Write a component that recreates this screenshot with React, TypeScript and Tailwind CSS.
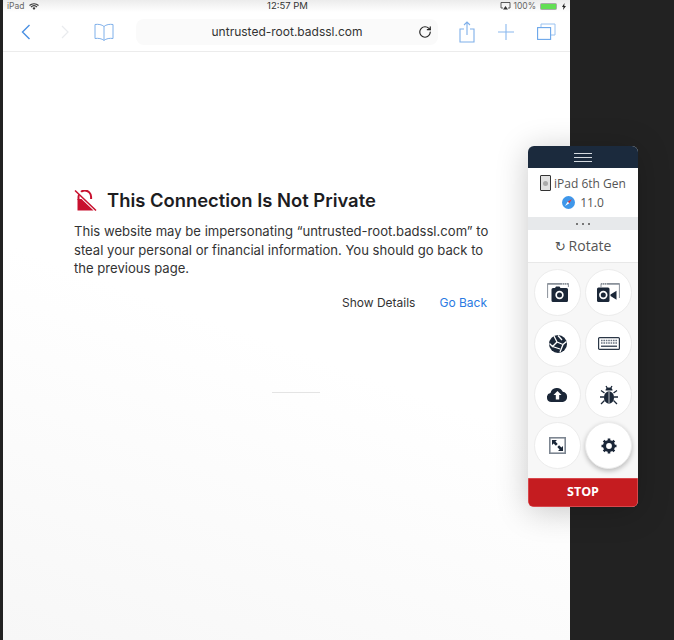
import { RotateCw } from "lucide-react";
import type { ReactNode } from "react";

const SANS = "font-['Inter','Liberation_Sans',sans-serif]";
const PANEL = "font-['Open_Sans','Noto_Sans',sans-serif]";

function Circle({ children, raised }: { children: ReactNode; raised?: boolean }) {
  return (
    <div
      className={`flex h-[47px] w-[47px] items-center justify-center rounded-full border border-[#ececec] bg-white ${
        raised ? "shadow-[0_2px_5px_rgba(0,0,0,0.25)]" : ""
      }`}
    >
      {children}
    </div>
  );
}

function CameraShot() {
  return (
    <svg width="22" height="19" viewBox="0 0 22 19" fill="none">
      <path d="M0.600 15V0.600H21.400V4" stroke="#8a919a" strokeWidth="1" />
      <path d="M0.600 0h20.800v1.800H0.600z" fill="#8a919a" />
      <path d="M15 1h1M17 1h1M19 1h1" stroke="#fff" strokeWidth="1" />
      <path d="M6 5h2l1-1.500h3.500l1 1.500h6a1.500 1.500 0 0 1 1.500 1.500v11a1.500 1.500 0 0 1-1.500 1.500H6a1.500 1.500 0 0 1-1.500-1.500v-11A1.500 1.500 0 0 1 6 5z" fill="#1b2738" />
      <circle cx="12.500" cy="12" r="4.200" fill="#fff" />
      <circle cx="12.500" cy="12" r="2.500" fill="#1b2738" />
    </svg>
  );
}

function VideoShot() {
  return (
    <svg width="23" height="19" viewBox="0 0 23 19" fill="none">
      <path d="M4 4V0.600H22.400V15" stroke="#8a919a" strokeWidth="1" />
      <path d="M4 0h18.400v1.800H4z" fill="#8a919a" />
      <path d="M5 1h1M7 1h1M9 1h1" stroke="#fff" strokeWidth="1" />
      <rect x="0" y="4.500" width="12.500" height="14.500" rx="1.500" fill="#1b2738" />
      <circle cx="6.300" cy="12" r="4.200" fill="#fff" />
      <circle cx="6.300" cy="12" r="2.500" fill="#1b2738" />
      <path d="M13.500 11.500l6-3.800v9l-6-3.800z" fill="#1b2738" />
    </svg>
  );
}

function Globe() {
  return (
    <svg width="18" height="18" viewBox="0 0 18 18">
      <circle cx="9" cy="9" r="9" fill="#1b2738" />
      <path d="M5 1l3 6-4.500 4.500L0.500 8.500M8 7l6 2.500-3 7.500M14 9.500l3.500-3M3.500 11.500l7.500 2.500M9 0.500l4 4.500" stroke="#fff" strokeWidth="1.300" fill="none" />
    </svg>
  );
}

function Keyboard() {
  return (
    <svg width="22" height="13" viewBox="0 0 22 13" fill="none">
      <rect x="0.600" y="0.600" width="20.800" height="11.800" rx="1" stroke="#2a3646" strokeWidth="1.200" />
      <path d="M3 3.500h16M3 6h16" stroke="#6a7482" strokeWidth="1.500" strokeDasharray="1.600 0.800" />
      <path d="M3 9.300h16" stroke="#4a5564" strokeWidth="1.500" />
    </svg>
  );
}

function CloudUpload() {
  return (
    <svg width="21" height="15" viewBox="0 0 21 15">
      <path d="M4.500 15a4.500 4.500 0 0 1-1-8.900A6.500 6.500 0 0 1 15.800 4.800 5.200 5.200 0 0 1 16 15z" fill="#1b2738" />
      <path d="M10.500 4l4 4h-2.300v4.500H8.800V8H6.500z" fill="#fff" />
    </svg>
  );
}

function Bug() {
  return (
    <svg width="20" height="20" viewBox="0 0 20 20" fill="none">
      <path d="M6.500 5.500a3.500 3 0 0 1 7 0z" fill="#1b2738" />
      <path d="M10 6.500c-3 0-5 2.500-5 6s2 6 5 6 5-2.500 5-6-2-6-5-6z" fill="#1b2738" />
      <path d="M10 7v11" stroke="#fff" strokeWidth="0.700" />
      <path d="M7 1l1.500 2.500M13 1l-1.500 2.500M5.500 8L2 5.500M14.500 8L18 5.500M5 12H1M15 12h4M5.500 15.500L2 19M14.500 15.500L18 19" stroke="#1b2738" strokeWidth="1.300" />
    </svg>
  );
}

function Resize() {
  return (
    <svg width="17" height="17" viewBox="0 0 17 17" fill="none">
      <rect x="0.800" y="0.800" width="15.400" height="15.400" stroke="#7d8691" strokeWidth="1.600" />
      <path d="M3 3h5L6.400 4.600 8.700 6.900 6.900 8.700 4.600 6.400 3 8zM14 14H9l1.600-1.600-2.300-2.300 1.800-1.800 2.300 2.300L14 9z" fill="#1b2738" />
    </svg>
  );
}

function Gear() {
  return (
    <svg width="16" height="16" viewBox="0 0 16 16">
      <circle cx="8" cy="8" r="4.500" fill="none" stroke="#1b2738" strokeWidth="3.200" />
      <path
        d="M8 0.500v3M8 12.500v3M0.500 8h3M12.500 8h3M2.700 2.700l2.100 2.100M11.200 11.200l2.100 2.100M2.700 13.300l2.100-2.100M11.200 4.800l2.100-2.100"
        stroke="#1b2738"
        strokeWidth="2.600"
      />
    </svg>
  );
}

function SafariBadge() {
  return (
    <svg width="13" height="13" viewBox="0 0 13 13">
      <circle cx="6.500" cy="6.500" r="6.500" fill="#3f97ea" />
      <path d="M10 3L7.300 7.300 5.700 5.700z" fill="#e0343a" />
      <path d="M3 10l2.700-4.300 1.600 1.600z" fill="#fff" />
    </svg>
  );
}

function DevicePanel() {
  return (
    <aside className={`absolute left-[528px] top-[146px] flex w-[110px] flex-col overflow-hidden rounded-[6px] bg-[#f7f7f7] shadow-[0_4px_32px_rgba(0,0,0,0.22)] ${PANEL}`}>
      <div className="flex h-[22px] flex-col items-center justify-center gap-[3px] bg-[#1b2a3d]">
        <span className="h-px w-[18px] bg-[#d5dae0]" />
        <span className="h-px w-[18px] bg-[#d5dae0]" />
        <span className="h-px w-[18px] bg-[#d5dae0]" />
      </div>
      <div className="flex h-[49px] flex-col items-center justify-center bg-white text-[12px] leading-[19px] text-[#555]">
        <div className="flex items-center gap-[3px]">
          <span className="flex h-[16px] w-[11px] items-center justify-center rounded-[1px] border border-[#333] bg-[#e2e2e2]">
            <span className="h-[5px] w-[5px] rounded-full bg-[#aaa]" />
          </span>
          iPad 6th Gen
        </div>
        <div className="flex items-center gap-[5px]">
          <SafariBadge />
          11.0
        </div>
      </div>
      <div className="flex h-[13px] items-center justify-center gap-[4px] bg-[#e7e9eb]">
        <span className="h-[2px] w-[2px] bg-[#777]" />
        <span className="h-[2px] w-[2px] bg-[#777]" />
        <span className="h-[2px] w-[2px] bg-[#777]" />
      </div>
      <div className="flex h-[33px] items-center justify-center gap-[3px] border-b border-[#e8e8e8] bg-white text-[14px] leading-none text-[#555]">
        <span className="font-['DejaVu_Sans',sans-serif] text-[13px]">↻</span>
        Rotate
      </div>
      <div className="grid grid-cols-2 justify-items-center gap-x-[4px] gap-y-[4px] px-[6px] pb-[9px] pt-[6px]">
        <Circle><CameraShot /></Circle>
        <Circle><VideoShot /></Circle>
        <Circle><Globe /></Circle>
        <Circle><Keyboard /></Circle>
        <Circle><CloudUpload /></Circle>
        <Circle><Bug /></Circle>
        <Circle><Resize /></Circle>
        <Circle raised><Gear /></Circle>
      </div>
      <div className="flex h-[29px] items-center justify-center rounded-b-[4px] border border-[#d8474c] bg-[#c51c20] text-[12.500px] font-bold text-white">
        STOP
      </div>
    </aside>
  );
}

function Toolbar() {
  return (
    <div className="flex h-[40px] items-center border-b border-[#ececec] bg-white">
      <svg width="10" height="16" viewBox="0 0 10 16" fill="none" className="ml-[18px]">
        <path d="M8.500 1L1.500 8l7 7" stroke="#4a90e2" strokeWidth="1.400" />
      </svg>
      <svg width="8" height="14" viewBox="0 0 8 14" fill="none" className="ml-[30px]">
        <path d="M1 1l6 6-6 6" stroke="#e9ebee" strokeWidth="1.200" />
      </svg>
      <svg width="20" height="18" viewBox="0 0 20 18" fill="none" className="ml-[25px]">
        <path d="M10 3.500C8 1.500 4 1 1 1.500v14c3-.5 7 0 9 2 2-2 6-2.500 9-2v-14c-3-.5-7 0-9 2zM10 3.500V17" stroke="#7fb0ea" strokeWidth="1" />
      </svg>
      <div className="ml-[22px] flex h-[26px] w-[302px] items-center rounded-[8px] bg-[#fafafa] pr-[6px]">
        <span className={`flex-1 pl-[20px] text-center text-[12px] text-[#333] ${SANS}`}>untrusted-root.badssl.com</span>
        <RotateCw size={14} strokeWidth={2} color="#222" />
      </div>
      <svg width="16" height="22" viewBox="0 0 16 22" fill="none" className="ml-[21px]">
        <path d="M5 8H1v13h14V8h-4M8 14V1M5 4l3-3 3 3" stroke="#7fb0ea" strokeWidth="1.100" />
      </svg>
      <svg width="16" height="16" viewBox="0 0 16 16" fill="none" className="ml-[23px]">
        <path d="M8 0v16M0 8h16" stroke="#8ab8ee" strokeWidth="1.100" />
      </svg>
      <svg width="19" height="17" viewBox="0 0 19 17" fill="none" className="ml-[23px]">
        <path d="M4 4V1h14v11h-4" stroke="#9ac2f0" strokeWidth="1" />
        <rect x="0.600" y="4.600" width="13" height="11.800" stroke="#6aa6ea" strokeWidth="1.100" />
      </svg>
    </div>
  );
}

function StatusBar() {
  return (
    <div className={`flex h-[12px] items-center justify-between bg-gradient-to-b from-[#ececec] to-white pl-[4px] pr-[4px] text-[8.500px] leading-none text-[#444] ${SANS}`}>
      <div className="flex w-[182px] items-center gap-[5px]">
        <span className="text-[#666]">iPad</span>
        <svg width="10" height="7" viewBox="0 0 10 7" fill="none">
          <path d="M0.500 2.500a6.500 6.500 0 0 1 9 0M2 4a4.500 4.500 0 0 1 6 0" stroke="#333" strokeWidth="1.100" />
          <path d="M3.500 5a2.200 2.200 0 0 1 3 0L5 7z" fill="#333" />
        </svg>
      </div>
      <span className="text-[9.500px] text-[#333]">12:57 PM</span>
      <div className="flex w-[180px] items-center justify-end gap-[2px]">
        <svg width="11" height="8" viewBox="0 0 10 8" fill="none">
          <path d="M2.500 6H0.500V0.500h9V6h-2" stroke="#333" strokeWidth="0.800" />
          <path d="M5 4l2.500 3.500h-5z" fill="#333" />
        </svg>
        <span className="text-[#666]">100%</span>
        <span className="ml-[2px] flex h-[7px] w-[17px] rounded-[1.500px] border border-[#aaa] bg-[#63df54]" />
        <svg width="4" height="7" viewBox="0 0 4 7" className="ml-[3px]">
          <path d="M2.500 0L0 4h1.500L1 7l3-4H2.300z" fill="#222" />
        </svg>
      </div>
    </div>
  );
}

function ErrorBody() {
  return (
    <main className={`flex flex-1 flex-col bg-[linear-gradient(20deg,#f7f7f7_0%,#ffffff_50%)] pl-[71px] pt-[137px] ${SANS}`}>
      <div className="flex items-center gap-[10px]">
        <svg width="23" height="21" viewBox="0 0 23 21" fill="none">
          <path d="M4.500 10V6.800a6.300 6.300 0 0 1 12.600 0V9" stroke="#c8102e" strokeWidth="2" />
          <path d="M3.500 9H7.500L19.500 20.500H3.500z" fill="#c8102e" />
          <path d="M1 0.500l21 20" stroke="#fff" strokeWidth="3.500" transform="translate(1 -1)" />
          <path d="M1 0.500l21 20" stroke="#c8102e" strokeWidth="1.500" />
        </svg>
        <h1 className="text-[18.400px] font-semibold leading-[22px] text-[#1d1d1f]">This Connection Is Not Private</h1>
      </div>
      <p className="mt-[11px] w-[425px] text-[13.100px] leading-[18.700px] text-[#333]">
        This website may be impersonating “untrusted-root.badssl.com” to steal your personal or financial information. You should go back to the previous page.
      </p>
      <div className="mt-[17px] flex w-[413px] justify-end gap-[24px] text-[12px] leading-[16px]">
        <span className="text-[#333]">Show Details</span>
        <span className="text-[#2a7ae2]">Go Back</span>
      </div>
      <div className="ml-[198px] mt-[81px] h-px w-[48px] bg-[#e4e4e4]" />
    </main>
  );
}

export default function App() {
  return (
    <div className="relative flex h-[640px] w-[674px] overflow-hidden bg-[#222222] pl-[3px] pr-[104px]">
      <div className="flex min-w-0 flex-1 flex-col">
        <StatusBar />
        <Toolbar />
        <ErrorBody />
      </div>
      <DevicePanel />
    </div>
  );
}
